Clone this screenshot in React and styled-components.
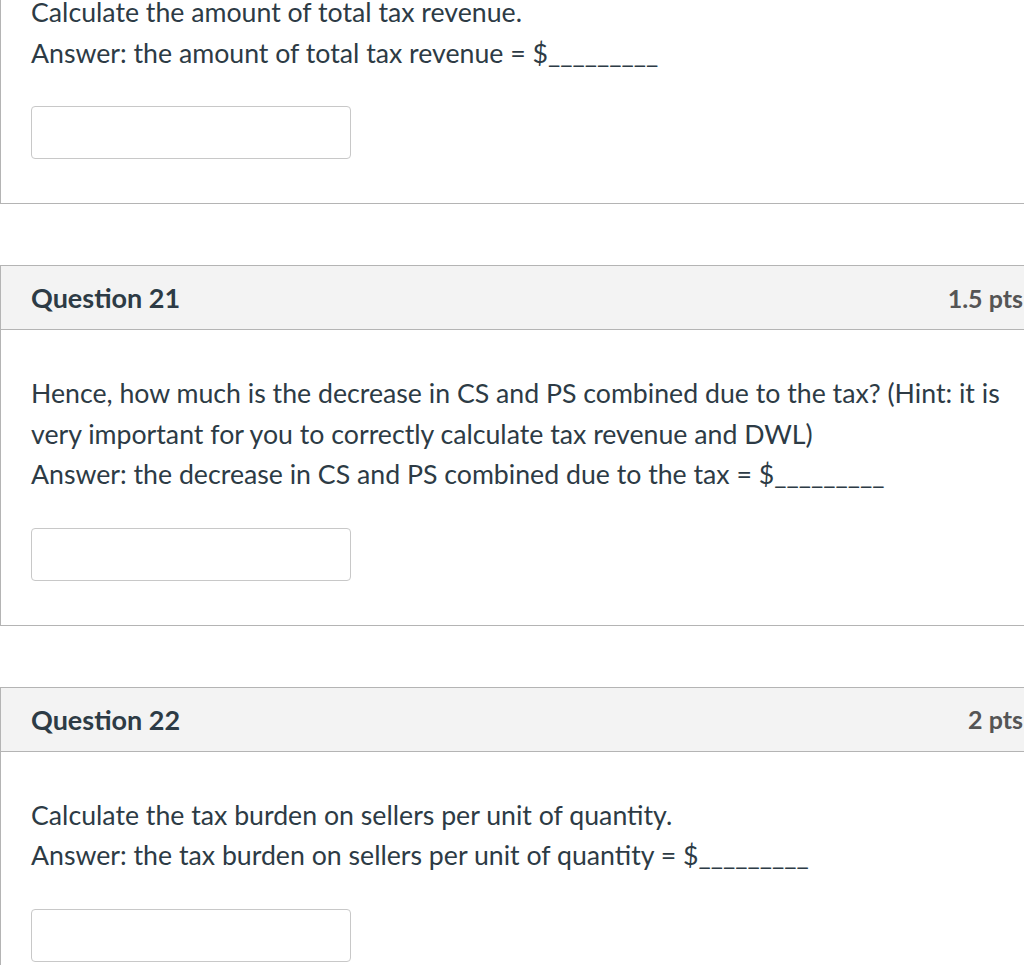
import React from "react";
import styled, { createGlobalStyle } from "styled-components";

const GlobalStyle = createGlobalStyle`
  html, body {
    margin: 0;
    padding: 0;
    background: #ffffff;
    overflow: hidden;
  }
  body {
    font-family: Lato, "Open Sans", sans-serif;
    color: #2d3b45;
  }
`;

const questions = [
  {
    id: 20,
    hideHeader: true,
    text: ["Calculate the amount of total tax revenue."],
    answer: "Answer: the amount of total tax revenue = $_________",
  },
  {
    id: 21,
    pts: "1.5 pts",
    text: [
      "Hence, how much is the decrease in CS and PS combined due to the tax? (Hint: it is very important for you to correctly calculate tax revenue and DWL)",
    ],
    answer:
      "Answer: the decrease in CS and PS combined due to the tax = $_________",
  },
  {
    id: 22,
    pts: "2 pts",
    text: ["Calculate the tax burden on sellers per unit of quantity."],
    answer:
      "Answer: the tax burden on sellers per unit of quantity = $_________",
  },
];

export default function App() {
  return (
    <>
      <GlobalStyle />
      <Page>
        {questions.map((q) => (
          <Question key={q.id}>
            {!q.hideHeader && (
              <Header>
                <Title>Question {q.id}</Title>
                <Points>{q.pts}</Points>
              </Header>
            )}
            <Body>
              {q.text.map((t) => (
                <Text key={t}>{t}</Text>
              ))}
              <Text>{q.answer}</Text>
              <AnswerInput type="text" />
            </Body>
          </Question>
        ))}
      </Page>
    </>
  );
}

const Page = styled.div`
  display: flex;
  flex-direction: column;
  gap: 61px;
  width: 1054px;
  margin-top: -52px;
`;

const Question = styled.section`
  border: 1.5px solid #b4b4b4;
  background: #fff;
`;

const Header = styled.div`
  display: flex;
  align-items: center;
  justify-content: space-between;
  height: 64px;
  padding: 0 30px;
  background: #f3f3f3;
  border-bottom: 1.5px solid #b4b4b4;
  box-sizing: border-box;
`;

const Title = styled.h2`
  margin: 0;
  font-size: 27px;
  font-weight: 700;
  color: #2d3b45;
`;

const Points = styled.span`
  font-size: 25px;
  font-weight: 700;
  color: #555555;
`;

const Body = styled.div`
  padding: 43px 30px 44px;
`;

const Text = styled.p`
  margin: 0;
  font-size: 26.7px;
  line-height: 40.5px;
`;

const AnswerInput = styled.input`
  display: block;
  margin-top: 33px;
  width: 320px;
  height: 53px;
  box-sizing: border-box;
  border: 1px solid #c8c8c8;
  border-radius: 4px;
  background: #fff;
  outline: none;
`;
